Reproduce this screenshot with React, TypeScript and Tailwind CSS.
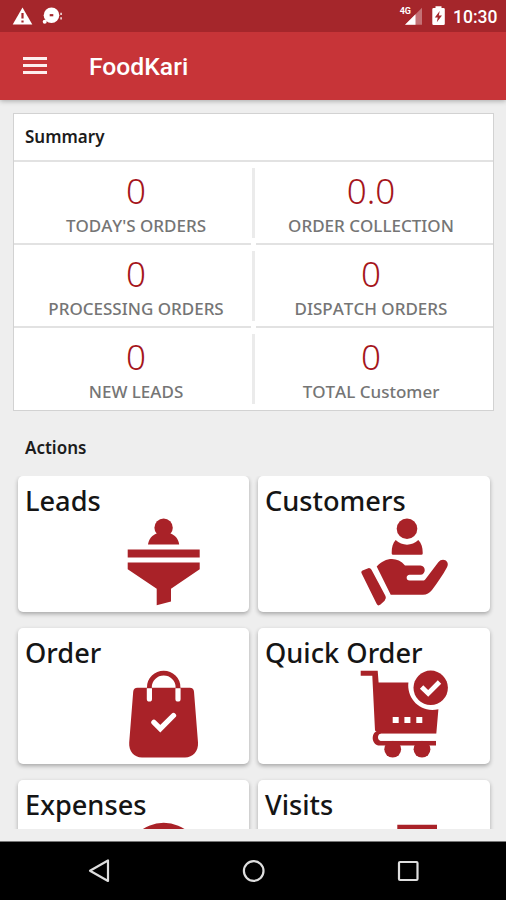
import type { ReactNode } from 'react'

interface Stat {
  value: string
  label: string
}

interface Action {
  title: string
  icon: ReactNode
}

const STATS: Stat[][] = [
  [
    { value: '0', label: "TODAY'S ORDERS" },
    { value: '0.0', label: 'ORDER COLLECTION' },
  ],
  [
    { value: '0', label: 'PROCESSING ORDERS' },
    { value: '0', label: 'DISPATCH ORDERS' },
  ],
  [
    { value: '0', label: 'NEW LEADS' },
    { value: '0', label: 'TOTAL Customer' },
  ],
]

const ACTIONS: Action[] = [
  {
    title: 'Leads',
    icon: (
      <>
        <circle cx="43.6" cy="9.8" r="9.2" />
        <path d="M28 26.5C28.8 21 32 17.2 36.6 15.5H50.6C55.2 17.2 58.4 21 59.2 26.5Z" />
        <path d="M7.7 31.5H79.7V39.5H7.7Z" />
        <path d="M7.7 44.5H79.7V51.2L51 70.8V83.6L36.7 87.2V70.8L7.7 51.2Z" />
      </>
    ),
  },
  {
    title: 'Customers',
    icon: (
      <>
        <circle cx="46" cy="10.8" r="10.3" />
        <path d="M34.7 22C41 28.2 51 28.2 57.3 22C60.4 25 61.7 29.3 61.7 34.5V35.4Q61.7 36.8 60.3 36.8H32.1Q30.7 36.8 30.7 35.4V34.5C30.7 29.3 31.8 25 34.7 22Z" />
        <path d="M15.7 48.5C24 39.5 36 38 44 47.5H59.4C65.2 47.5 65.2 56.8 59.4 56.8H48.6C44.7 56.8 44.7 62.6 48.6 62.6H62C63 62.6 63.8 62.1 64.4 61.3L77.3 44.3C81.4 38.6 89.4 43 86 49.3C81.8 57 76 65.5 71 72C68.5 75.2 65.8 76.8 62 76.8H29.7Z" />
        <path d="M2.2 52.3L6.6 50.4Q9.1 49.4 10.5 51.8L24.5 78Q25.8 80.5 23.6 82.8L19.5 86.6Q17 88.6 15.6 85.8L.8 55.8Q-.7 53.3 2.2 52.3Z" />
      </>
    ),
  },
  {
    title: 'Order',
    icon: (
      <>
        <path d="M29.4 18V17.2A14.3 14 0 0 1 58 17.2V18" fill="none" stroke="currentColor" strokeWidth="4.8" />
        <path d="M17.5 17.8H69.8Q73.7 17.8 74 21.8L78 72.5C78.6 81 73 87.5 65 87.5H22C14 87.5 8.6 81 9.2 72.5L13.2 21.8Q13.5 17.8 17.5 17.8Z" />
        <path
          d="M26.8 18.2H32V29A2.6 2.6 0 0 1 26.8 29ZM55.4 18.2H60.6V29A2.6 2.6 0 0 1 55.4 29Z"
          fill="#fff"
        />
        <path
          d="M33.9 52.4L40.3 58.7L53.5 45.5"
          fill="none"
          stroke="#fff"
          strokeWidth="5.3"
          strokeLinecap="round"
        />
      </>
    ),
  },
  {
    title: 'Quick Order',
    icon: (
      <>
        <path d="M-.3 .8H16.7L17.6 12.5H47.4C45.5 28 59 43.5 77.4 39.2L75.3 63.8H18.3L14 60.5L11.3 5.8H-.3Z" />
        <path d="M19 60.4C9.3 60 9.3 75.5 19 75.5H75V70.8H20C16 70.8 16 63.8 20 63.8Z" />
        <circle cx="31.7" cy="79.2" r="8.4" />
        <circle cx="61" cy="79.2" r="8.4" />
        <path d="M19.5 63.8H78V70.8H19.5Q15.5 67.3 19.5 63.8Z" fill="#fff" />
        <path d="M31.7 47.1H37.7V53H31.7ZM43.4 47.1H49.4V53H43.4ZM55.3 47.1H61.3V53H55.3Z" fill="#fff" />
        <circle cx="69.7" cy="17.8" r="17.2" />
        <path d="M60.6 17L67.2 23.4L78.5 12" fill="none" stroke="#fff" strokeWidth="4.8" />
      </>
    ),
  },
  { title: 'Expenses', icon: <circle cx="43.7" cy="38.8" r="38" /> },
  { title: 'Visits', icon: <path d="M36.3 2.7H76V40H36.3Z" /> },
]

function StatusBar() {
  return (
    <div className="relative z-20 flex h-8 items-center bg-[#a5262b] pr-[9px] pl-3 text-white">
      <svg className="h-8 w-[60px]" viewBox="12 0 60 32" fill="currentColor">
        <path d="M22.5 7.5L32.3 24.5H12.7Z" />
        <path d="M21.4 13H23.6V18.6H21.4ZM21.4 20.4H23.6V22.6H21.4Z" fill="#a5262b" />
        <circle cx="51.5" cy="15.3" r="7.8" />
        <circle cx="44.7" cy="21.8" r="2" />
        <path d="M49.7 14.1H53.3V16.3H49.7Z" fill="#a5262b" />
        <path d="M60.2 12.8H62V15H60.2ZM60.2 17.2H62V19.5H60.2Z" opacity=".75" />
      </svg>
      <div className="flex-1" />
      <span className="-mt-2.5 mr-[-7px] font-[Roboto] text-[9px] leading-none font-bold">4G</span>
      <svg className="h-8 w-[46px]" viewBox="404 0 46 32" fill="currentColor">
        <path d="M405 24.8L422 7.8V24.8Z" opacity=".35" />
        <path d="M405 24.8L415.5 14.3V24.8Z" />
        <path d="M435.5 6.2H441.5V8H443.5Q444.8 8 444.8 9.3V23.8Q444.8 25.1 443.5 25.1H433.6Q432.3 25.1 432.3 23.8V9.3Q432.3 8 433.6 8H435.5Z" />
        <path d="M439.7 11L434.8 17.5H437.8L436.8 22.3L442 15.6H438.8Z" fill="#a5262b" />
      </svg>
      <span className="mt-0.5 ml-[3px] w-11 font-[Roboto] text-[17.5px] leading-8 font-medium">10:30</span>
    </div>
  )
}

function AppBar() {
  return (
    <header className="relative z-10 flex h-[68px] items-center bg-[#c73438] pl-[23px] text-white shadow-[0_1px_5px_rgba(0,0,0,0.3)]">
      <div className="-mt-0.5 flex w-6 flex-col gap-1">
        <span className="h-[3px] bg-[#fdeeee]" />
        <span className="h-[3px] bg-[#fdeeee]" />
        <span className="h-[3px] bg-[#fdeeee]" />
      </div>
      <h1 className="mt-0.5 ml-[42px] font-[Roboto] text-[24.7px] font-medium">FoodKari</h1>
    </header>
  )
}

function StatCell({ value, label }: Stat) {
  return (
    <div className="flex flex-1 flex-col items-center">
      <span className="mt-[6px] text-[35px] leading-[46px] font-[350] text-[#a5161b]">{value}</span>
      <span className="text-[17px] leading-[23px] font-medium whitespace-nowrap text-[#757575] [font-kerning:none]">
        {label}
      </span>
    </div>
  )
}

function Summary() {
  return (
    <section className="mx-[13px] mt-[13px] mr-3 h-[298px] border border-[#d2d2d2] bg-white">
      <h2 className="h-12 border-b-2 border-[#e2e2e2] pl-[11px] text-[17px] leading-[46px] font-semibold text-[#1c1c1c]">
        Summary
      </h2>
      {STATS.map((row, i) => (
        <div key={row[0].label} className="h-[83px]">
          <div className="flex h-[81px]">
            <div className="flex w-[238px] pl-[6px]">
              <StatCell {...row[0]} />
            </div>
            <div className="mt-[6px] h-[70px] w-[3px] bg-[#ebebeb]" />
            <div className="flex flex-1 pr-[6px]">
              <StatCell {...row[1]} />
            </div>
          </div>
          {i < STATS.length - 1 && (
            <div className="flex gap-[5px]">
              <div className="h-0.5 w-[237px] bg-[#e2e2e2]" />
              <div className="h-0.5 flex-1 bg-[#e2e2e2]" />
            </div>
          )}
        </div>
      ))}
    </section>
  )
}

function ActionCard({ title, icon }: Action) {
  return (
    <div className="flex h-[136px] flex-col rounded-[5px] bg-white shadow-[0_2px_4px_rgba(0,0,0,0.3)]">
      <h3 className="h-[42px] pl-[7px] text-[27.2px] leading-[49px] font-medium whitespace-nowrap text-[#151515]">
        {title}
      </h3>
      <svg className="mr-[41px] h-[88px] w-[88px] self-end overflow-visible text-[#a92228]" viewBox="0 0 88 88" fill="currentColor">
        {icon}
      </svg>
    </div>
  )
}

function NavBar() {
  return (
    <nav className="h-[59px] border-t border-[#777] bg-black">
      <svg className="h-[58px] w-full" viewBox="0 842 506 58" fill="none" stroke="#dedede" strokeWidth="2.2">
        <path d="M108 860.5V881L90 870.8Z" strokeLinejoin="round" />
        <circle cx="253.7" cy="871" r="9.8" />
        <rect x="399" y="862" width="18.5" height="18" rx="1" />
      </svg>
    </nav>
  )
}

export default function App() {
  return (
    <div className="flex h-[900px] w-[506px] flex-col overflow-hidden bg-[#eeeeee] font-['Noto_Sans','Open_Sans',sans-serif]">
      <StatusBar />
      <AppBar />
      <Summary />
      <h2 className="mt-[25px] h-10 pl-[25px] text-[17px] leading-[23px] font-semibold text-[#1c1c1c]">Actions</h2>
      <div className="grid h-[353px] grid-cols-[231px_232px] content-start gap-x-[9px] gap-y-4 overflow-hidden pl-[18px]">
        {ACTIONS.map(action => (
          <ActionCard key={action.title} {...action} />
        ))}
      </div>
      <div className="flex-1" />
      <NavBar />
    </div>
  )
}
